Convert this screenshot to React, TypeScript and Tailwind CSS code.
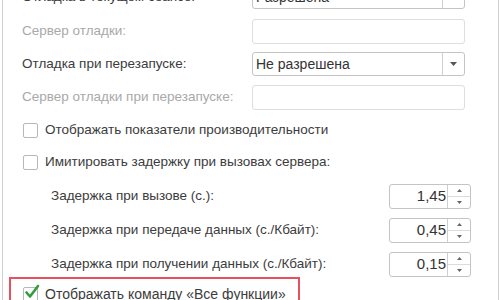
const font = { fontFamily: '"Liberation Sans", Arial, sans-serif' };

function Caret() {
  return (
    <svg width="7" height="4" viewBox="0 0 7 4">
      <path d="M0 0h7L3.5 4z" fill="#555" />
    </svg>
  );
}

function Select({ value }: { value: string }) {
  return (
    <div className="flex h-[24px] w-[213px] items-stretch rounded-[3px] border border-[#c4c4c4] bg-white">
      <div className="flex flex-1 items-center pl-[3px] text-[14px] text-[#333]">{value}</div>
      <div className="flex w-[22px] items-center justify-center border-l border-[#cfcfcf]">
        <Caret />
      </div>
    </div>
  );
}

function Field() {
  return <div className="h-[25px] w-[213px] rounded-[3px] border border-[#dedede] bg-white" />;
}

function Spin({ value }: { value: string }) {
  return (
    <div className="flex h-[25px] w-[82px] items-stretch rounded-[3px] border border-[#c4c4c4] bg-white">
      <div className="flex flex-1 items-center justify-end pr-[1px] text-[15px] text-[#333]">{value}</div>
      <div className="flex w-[23px] flex-col border-l border-[#cfcfcf]">
        <div className="flex flex-1 items-center justify-center border-b border-[#dcdcdc]">
          <svg width="5" height="3" viewBox="0 0 5 3">
            <path d="M0 3h5L2.5 0z" fill="#666" />
          </svg>
        </div>
        <div className="flex flex-1 items-center justify-center">
          <svg width="5" height="3" viewBox="0 0 5 3">
            <path d="M0 0h5L2.5 3z" fill="#666" />
          </svg>
        </div>
      </div>
    </div>
  );
}

function Box({ checked }: { checked?: boolean }) {
  return (
    <div className="relative h-[15px] w-[15px] shrink-0 rounded-[2px] border border-[#b8b8b8] bg-white">
      {checked && (
        <svg className="absolute left-[0px] top-[-4px]" width="16" height="16" viewBox="0 0 16 16">
          <path d="M2.5 8.5l3.5 4 8-10.5" fill="none" stroke="#2f9e3f" strokeWidth="2.6" strokeLinecap="round" strokeLinejoin="round" />
        </svg>
      )}
    </div>
  );
}

export default function App() {
  return (
    <div className="h-[300px] w-[500px] overflow-hidden bg-white" style={font}>
      <div className="ml-[2px] mt-[-20px] w-[497px] border-x border-[#cfcfcf] pb-10 text-[13.5px] text-[#3c3c3c]">
        <div className="flex h-[34px] items-center pl-[19px]">
          <span className="w-[230px]">Отладка в текущем сеансе:</span>
          <Select value="Разрешена" />
        </div>
        <div className="flex h-[34px] items-center pl-[19px]">
          <span className="w-[230px] text-[#a9a9a9]">Сервер отладки:</span>
          <Field />
        </div>
        <div className="flex h-[32px] items-center pl-[19px]">
          <span className="w-[230px]">Отладка при перезапуске:</span>
          <Select value="Не разрешена" />
        </div>
        <div className="flex h-[35px] items-center pl-[19px]">
          <span className="w-[230px] text-[#a9a9a9]">Сервер отладки при перезапуске:</span>
          <Field />
        </div>
        <div className="flex h-[31px] items-center gap-[7px] pl-[20px]">
          <Box />
          <span>Отображать показатели производительности</span>
        </div>
        <div className="flex h-[33px] items-center gap-[7px] pl-[20px]">
          <Box />
          <span>Имитировать задержку при вызовах сервера:</span>
        </div>
        <div className="flex h-[34px] items-center justify-between pl-[48px] pr-[27px]">
          <span>Задержка при вызове (с.):</span>
          <Spin value="1,45" />
        </div>
        <div className="flex h-[34px] items-center justify-between pl-[48px] pr-[27px]">
          <span>Задержка при передаче данных (с./Кбайт):</span>
          <Spin value="0,45" />
        </div>
        <div className="flex h-[34px] items-center justify-between pl-[48px] pr-[27px]">
          <span>Задержка при получении данных (с./Кбайт):</span>
          <Spin value="0,15" />
        </div>
        <div className="ml-[6px] mt-[-4px] flex h-[40px] w-[291px] items-start gap-[7px] border-2 border-[#e8505b] pl-[12px] pt-[8px] text-[14px]">
          <Box checked />
          <span className="leading-[15px]">Отображать команду «Все функции»</span>
        </div>
      </div>
    </div>
  );
}
